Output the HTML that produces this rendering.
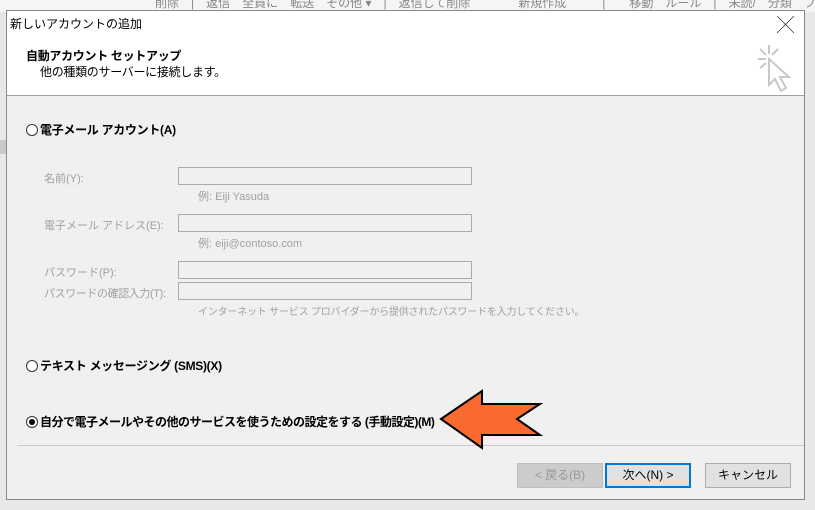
<!DOCTYPE html>
<html><head><meta charset="utf-8"><style>
*{margin:0;padding:0;box-sizing:border-box}
body{width:815px;height:510px;overflow:hidden;background:#e8e8e8;font-family:"Liberation Sans","Noto Sans CJK JP",sans-serif;font-size:12px;position:relative}
.a{position:absolute;white-space:nowrap}
.top{position:absolute;left:0;top:0;width:815px;height:12px;background:#f5f5f5;color:#888;font-size:12px;overflow:hidden}
.dlg{position:absolute;left:6px;top:10px;width:799px;height:490px;background:#f0f0f0;border:1px solid #888}
.inp{position:absolute;left:171px;width:294px;height:18px;border:1px solid #ababab;background:#f0f0f0}
.lab{position:absolute;left:37px;color:#a0a0a0;font-size:11px}
.ex{position:absolute;left:191px;color:#a0a0a0;font-size:11px}
.rad{position:absolute;left:19px;font-weight:bold;font-size:12px;color:#000}
.rad i{display:inline-block;width:12px;height:12px;border:1px solid #333;border-radius:50%;vertical-align:-2px;margin-right:2px;position:relative;background:#fff}
.btn{position:absolute;top:452px;height:25px;border:1px solid #adadad;background:#e1e1e1;text-align:center;line-height:23px;font-size:12px}
</style></head><body>
<div class="top"><span class="a" style="left:155px;top:-6px">削除　|　返信　全員に　転送　その他 ▾　|　返信して削除　　　　新規作成　　　|　　移動　ルール　|　未読/　分類　フラグの</span></div>
<div class="a" style="left:0;top:140px;width:6px;height:14px;background:#c8c8c8"></div>
<div class="dlg">
 <div style="position:absolute;left:0;top:0;width:797px;height:85px;background:#fff;border-bottom:1px solid #a0a0a0"></div>
 <div class="a" style="left:3px;top:4px;font-size:12px">新しいアカウントの追加</div>
 <div class="a" style="left:770px;top:0px;font-size:17px;font-weight:300;color:#222">╳</div>
 <div class="a" style="left:19px;top:36px;font-weight:bold;font-size:12px;letter-spacing:-0.3px">自動アカウント セットアップ</div>
 <div class="a" style="left:33px;top:52px;font-size:12px;letter-spacing:-0.3px">他の種類のサーバーに接続します。</div>
 <svg class="a" style="left:750px;top:32px" width="36" height="50" viewBox="0 0 36 50"><g stroke="#c8c8c8" stroke-width="2" fill="none"><path d="M12 2v9M3 6l6 6M21 6l-6 6M1 16h8M3 25l6-5"/><path d="M12 16v26l6-6 6 12 5-3-6-11h9z" fill="#fff"/></g></svg>
 <div class="rad" style="top:110px;letter-spacing:-0.3px"><i></i>電子メール アカウント(A)</div>
 <div class="lab" style="top:159px">名前(Y):</div><div class="inp" style="top:156px"></div>
 <div class="ex" style="top:177px">例: Eiji Yasuda</div>
 <div class="lab" style="top:206px">電子メール アドレス(E):</div><div class="inp" style="top:203px"></div>
 <div class="ex" style="top:224px">例: eiji@contoso.com</div>
 <div class="lab" style="top:253px">パスワード(P):</div><div class="inp" style="top:250px"></div>
 <div class="lab" style="top:274px;letter-spacing:-0.4px">パスワードの確認入力(T):</div><div class="inp" style="top:271px"></div>
 <div class="ex" style="top:292px;font-size:10px;letter-spacing:-0.2px">インターネット サービス プロバイダーから提供されたパスワードを入力してください。</div>
 <div class="rad" style="top:346px;letter-spacing:-0.3px"><i></i>テキスト メッセージング (SMS)(X)</div>
 <div class="rad" style="top:402px;letter-spacing:-0.5px"><i><b style="position:absolute;left:2px;top:2px;width:6px;height:6px;border-radius:50%;background:#000"></b></i>自分で電子メールやその他のサービスを使うための設定をする (手動設定)(M)</div>
 <div style="position:absolute;left:10px;top:434px;width:787px;border-top:1px solid #c8c8c8"></div>
 <div class="btn" style="left:510px;width:86px;background:#cccccc;border-color:#bfbfbf;color:#999">&lt; 戻る(B)</div>
 <div class="btn" style="left:598px;width:86px;border:2px solid #0078d7;line-height:21px">次へ(N) &gt;</div>
 <div class="btn" style="left:698px;width:86px">キャンセル</div>
</div>
<svg class="a" style="left:0;top:0" width="815" height="510"><path d="M441 419L482 391L482 404L540 404L517 419L540 435L482 435L482 448Z" fill="#f96a31" stroke="#000" stroke-width="2" stroke-linejoin="miter"/></svg>
</body></html>
